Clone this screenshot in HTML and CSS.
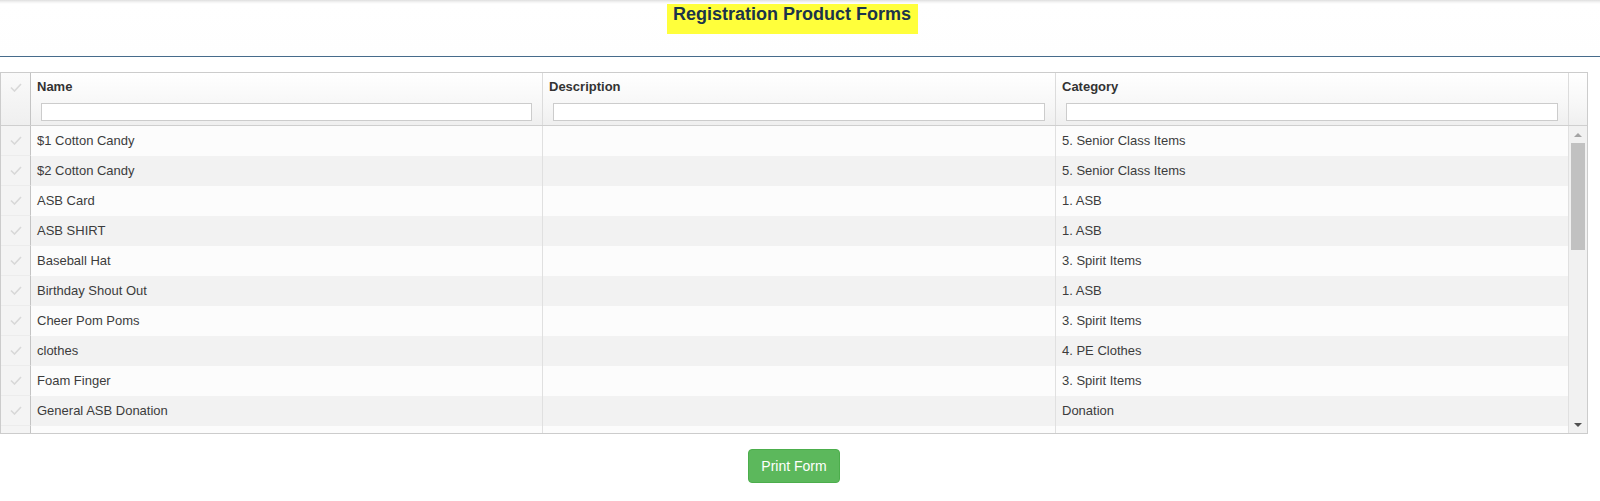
FILE: index.html
```html
<!DOCTYPE html>
<html lang="en">
<head>
<meta charset="utf-8">
<title>Registration Product Forms</title>
<link rel="stylesheet" href="styles.css">
</head>
<body>
<header class="topbar">
  <h1 class="title"><span class="title-mark">Registration Product Forms</span></h1>
</header>
<div class="page">
  <div class="grid">
    <div class="grid-head">
      <div class="hcell check-cell head-check"><svg class="tick" viewBox="0 0 12 9" width="12" height="9"><polyline points="1,4.5 4.5,8 11,1" fill="none" stroke="#d8d8d8" stroke-width="1.6"/></svg></div>
      <div class="hcell"><div class="htitle">Name</div><input class="filter" type="text"></div>
      <div class="hcell"><div class="htitle">Description</div><input class="filter" type="text"></div>
      <div class="hcell"><div class="htitle">Category</div><input class="filter" type="text"></div>
      <div class="hcell hcell-end"></div>
    </div>
    <div class="grid-body">
      <div class="rows">
        <div class="row"><div class="cell check-cell"><svg class="tick" viewBox="0 0 12 9" width="12" height="9"><polyline points="1,4.5 4.5,8 11,1" fill="none" stroke="#d8d8d8" stroke-width="1.6"/></svg></div><div class="cell">$1 Cotton Candy</div><div class="cell"></div><div class="cell">5. Senior Class Items</div></div>
        <div class="row"><div class="cell check-cell"><svg class="tick" viewBox="0 0 12 9" width="12" height="9"><polyline points="1,4.5 4.5,8 11,1" fill="none" stroke="#d8d8d8" stroke-width="1.6"/></svg></div><div class="cell">$2 Cotton Candy</div><div class="cell"></div><div class="cell">5. Senior Class Items</div></div>
        <div class="row"><div class="cell check-cell"><svg class="tick" viewBox="0 0 12 9" width="12" height="9"><polyline points="1,4.5 4.5,8 11,1" fill="none" stroke="#d8d8d8" stroke-width="1.6"/></svg></div><div class="cell">ASB Card</div><div class="cell"></div><div class="cell">1. ASB</div></div>
        <div class="row"><div class="cell check-cell"><svg class="tick" viewBox="0 0 12 9" width="12" height="9"><polyline points="1,4.5 4.5,8 11,1" fill="none" stroke="#d8d8d8" stroke-width="1.6"/></svg></div><div class="cell">ASB SHIRT</div><div class="cell"></div><div class="cell">1. ASB</div></div>
        <div class="row"><div class="cell check-cell"><svg class="tick" viewBox="0 0 12 9" width="12" height="9"><polyline points="1,4.5 4.5,8 11,1" fill="none" stroke="#d8d8d8" stroke-width="1.6"/></svg></div><div class="cell">Baseball Hat</div><div class="cell"></div><div class="cell">3. Spirit Items</div></div>
        <div class="row"><div class="cell check-cell"><svg class="tick" viewBox="0 0 12 9" width="12" height="9"><polyline points="1,4.5 4.5,8 11,1" fill="none" stroke="#d8d8d8" stroke-width="1.6"/></svg></div><div class="cell">Birthday Shout Out</div><div class="cell"></div><div class="cell">1. ASB</div></div>
        <div class="row"><div class="cell check-cell"><svg class="tick" viewBox="0 0 12 9" width="12" height="9"><polyline points="1,4.5 4.5,8 11,1" fill="none" stroke="#d8d8d8" stroke-width="1.6"/></svg></div><div class="cell">Cheer Pom Poms</div><div class="cell"></div><div class="cell">3. Spirit Items</div></div>
        <div class="row"><div class="cell check-cell"><svg class="tick" viewBox="0 0 12 9" width="12" height="9"><polyline points="1,4.5 4.5,8 11,1" fill="none" stroke="#d8d8d8" stroke-width="1.6"/></svg></div><div class="cell">clothes</div><div class="cell"></div><div class="cell">4. PE Clothes</div></div>
        <div class="row"><div class="cell check-cell"><svg class="tick" viewBox="0 0 12 9" width="12" height="9"><polyline points="1,4.5 4.5,8 11,1" fill="none" stroke="#d8d8d8" stroke-width="1.6"/></svg></div><div class="cell">Foam Finger</div><div class="cell"></div><div class="cell">3. Spirit Items</div></div>
        <div class="row"><div class="cell check-cell"><svg class="tick" viewBox="0 0 12 9" width="12" height="9"><polyline points="1,4.5 4.5,8 11,1" fill="none" stroke="#d8d8d8" stroke-width="1.6"/></svg></div><div class="cell">General ASB Donation</div><div class="cell"></div><div class="cell">Donation</div></div>
        <div class="row"><div class="cell check-cell"></div><div class="cell"></div><div class="cell"></div><div class="cell"></div></div>
      </div>
      <div class="scrollbar">
        <div class="sb-btn"><span class="arrow-up"></span></div>
        <div class="sb-track"><div class="sb-thumb"></div></div>
        <div class="sb-btn"><span class="arrow-down"></span></div>
      </div>
    </div>
  </div>
  <div class="actions">
    <button class="btn-print" type="button">Print Form</button>
  </div>
</div>
</body>
</html>
```
FILE: styles.css
```css
html, body {
  margin: 0;
  padding: 0;
  background: #ffffff;
}
body {
  font-family: "Liberation Sans", Arial, sans-serif;
  color: #333333;
  width: 1600px;
  height: 501px;
  overflow: hidden;
}
.topbar {
  height: 52px;
  padding-top: 4px;
  background: linear-gradient(to bottom, #dedede 0px, #f3f3f3 2px, #ffffff 4px, #fefefe 100%);
  border-bottom: 1px solid #466b8b;
  width: 1600px;
}
.title {
  margin: 0;
  width: 1588px;
  text-align: center;
  font-size: 18px;
  font-weight: bold;
  line-height: 21px;
  color: #1b344a;
}
.title-mark {
  display: inline-block;
  background: #ffff3b;
  padding: 0 7px 9px 6px;
  margin-left: -3px;
}
.page {
  width: 1588px;
  padding-top: 15px;
}
.grid {
  border: 1px solid #cccccc;
  width: 1586px;
}
.grid-head {
  display: grid;
  grid-template-columns: 30px 512px 513px 513px 18px;
  height: 52px;
  border-bottom: 1px solid #cfcfcf;
  background: linear-gradient(to bottom, #ffffff 0%, #f7f7f7 60%, #efefef 100%);
}
.hcell {
  border-right: 1px solid #dcdcdc;
  padding: 6px 10px 0 6px;
  box-sizing: border-box;
  display: flex;
  flex-direction: column;
}
.hcell-end {
  border-right: none;
}
.htitle {
  font-size: 13px;
  font-weight: bold;
  line-height: 15px;
  color: #333333;
}
.filter {
  margin: 9px 0 0 4px;
  height: 18px;
  box-sizing: border-box;
  border: 1px solid #cccccc;
  background: #ffffff;
  padding: 0 4px;
  font: 13px "Liberation Sans", Arial, sans-serif;
  width: auto;
}
.check-cell {
  border-right: 1px solid #c4c4c4;
  display: flex;
  align-items: center;
  justify-content: center;
  padding: 0;
  background: linear-gradient(to bottom, #f9f9f9, #f1f1f1);
}
.grid-head .head-check {
  flex-direction: column;
  align-items: center;
  justify-content: flex-start;
  padding: 10px 0 0 0;
  border-right: 1px solid #c4c4c4;
  background: linear-gradient(to bottom, #fafafa, #efefef);
}
.grid-body {
  display: flex;
  height: 307px;
}
.rows {
  width: 1568px;
  overflow: hidden;
}
.row {
  display: grid;
  grid-template-columns: 30px 512px 513px 513px;
  height: 30px;
  background: #fcfcfc;
}
.row:nth-child(even) {
  background: #f2f2f2;
}
.cell {
  border-right: 1px solid #e0e0e0;
  padding: 0 6px;
  font-size: 13px;
  line-height: 30px;
  color: #3c3c3c;
  white-space: nowrap;
  overflow: hidden;
}
.row .check-cell {
  padding: 0;
  border-right: 1px solid #c4c4c4;
  background: #f4f4f4;
  border-bottom: 1px solid #ececec;
  box-sizing: border-box;
}
.scrollbar {
  width: 18px;
  display: flex;
  flex-direction: column;
  background: #f1f1f1;
}
.sb-btn {
  height: 17px;
  display: flex;
  align-items: center;
  justify-content: center;
}
.arrow-up {
  width: 0;
  height: 0;
  border-left: 4px solid transparent;
  border-right: 4px solid transparent;
  border-bottom: 4px solid #a3a3a3;
}
.arrow-down {
  width: 0;
  height: 0;
  border-left: 4px solid transparent;
  border-right: 4px solid transparent;
  border-top: 4px solid #505050;
}
.sb-track {
  flex: 1;
  padding: 0 2px 0 2px;
}
.sb-thumb {
  height: 107px;
  background: #c1c1c1;
}
.actions {
  display: flex;
  justify-content: center;
  padding-top: 15px;
}
.btn-print {
  font-family: "Liberation Sans", Arial, sans-serif;
  font-size: 14px;
  line-height: 20px;
  padding: 6px 12px;
  color: #ffffff;
  background: #5cb85c;
  border: 1px solid #4cae4c;
  border-radius: 4px;
  cursor: pointer;
}
```
